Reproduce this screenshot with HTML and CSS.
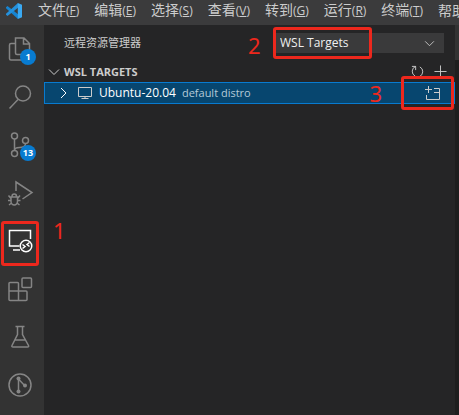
FILE: index.html
```html
<!DOCTYPE html>
<html lang="zh-CN">
<head>
<meta charset="utf-8">
<title>远程资源管理器</title>
<link rel="stylesheet" href="styles.css">
</head>
<body>
<div class="window">
  <header class="titlebar">
    <svg class="logo" viewBox="0 0 18 18" aria-hidden="true">
      <path fill="#1684d1" d="M1 5.2 2.5 4 13 12.3V17L1 6.2z"/>
      <path fill="#2491dd" d="M1 12.8 2.5 14 13 5.7V1L1 11.8z"/>
      <path fill="#3aa9f2" d="M12.8 1 17 2.8v12.4L12.8 17z"/>
    </svg>
    <nav class="menu">
      <button type="button">文件<span>(<u>F</u>)</span></button>
      <button type="button">编辑<span>(<u>E</u>)</span></button>
      <button type="button">选择<span>(<u>S</u>)</span></button>
      <button type="button">查看<span>(<u>V</u>)</span></button>
      <button type="button">转到<span>(<u>G</u>)</span></button>
      <button type="button">运行<span>(<u>R</u>)</span></button>
      <button type="button">终端<span>(<u>T</u>)</span></button>
      <button type="button">帮助</button>
    </nav>
  </header>
  <div class="workbench">
    <nav class="activity">
      <button type="button" aria-label="资源管理器">
        <svg viewBox="0 0 24 24"><path d="M7.5 1H16l5.5 5.5V16a1.5 1.5 0 0 1-1.5 1.500H9A1.500 1.500 0 0 1 7.500 16zM15.500 1v6h6M7.500 6.500H3A1.500 1.500 0 0 0 1.500 8v13.500A1.500 1.500 0 0 0 3 23h11.500a1.500 1.500 0 0 0 1.500-1.500v-4"/></svg>
        <span class="badge">1</span>
      </button>
      <button type="button" aria-label="搜索">
        <svg viewBox="0 0 24 24"><circle cx="15" cy="8.500" r="7.500"/><path d="M10 14.500 1.500 23.500"/></svg>
      </button>
      <button type="button" aria-label="源代码管理">
        <svg viewBox="0 0 24 24"><circle cx="6.500" cy="3" r="3"/><circle cx="17.500" cy="7.500" r="3"/><circle cx="6.500" cy="20.500" r="3"/><path d="M6.500 6v11.500M17.500 10.500c0 4-3.500 4-6 4-3 0-5 .5-5 3"/></svg>
        <span class="badge">13</span>
      </button>
      <button type="button" aria-label="运行和调试">
        <svg viewBox="0 0 24 24"><path d="M8 10V1l16 10.500-9.500 6.500"/><path d="M3 16h6.500v4.500a3.250 3.500 0 0 1-6.500 0zM4 16v-.5a2.250 2.500 0 0 1 4.500 0v.5M3 17.500.5 14.500M9.500 17.500l2.500-3M3 19.500H0M9.500 19.500h3M3.500 22l-2.500 2M9 22l2.500 2"/></svg>
      </button>
      <button type="button" class="active" aria-label="远程资源管理器">
        <svg viewBox="0 0 24 24"><path d="M11.500 17H1.500V1.500h21V10M5 21h7"/><circle cx="18" cy="17" r="5.750"/><path d="m14.500 15.500 2.500 2-2.500 2M21.500 13.500l-2.500 2 2.500 2"/></svg>
        <span class="mark mark-one"></span><span class="number number-one">1</span>
      </button>
      <button type="button" aria-label="扩展">
        <svg viewBox="0 0 24 24"><rect x="14" y="1" width="9.500" height="9.500" rx="1"/><path d="M1 6.500a1 1 0 0 1 1-1h7.500a1 1 0 0 1 1 1V14H18a1 1 0 0 1 1 1v7.500a1 1 0 0 1-1 1H2a1 1 0 0 1-1-1zM1 14h9.500v9.500"/></svg>
      </button>
      <button type="button" aria-label="测试">
        <svg viewBox="0 0 24 24"><path d="M7.500 1.500h9M9.500 1.500v8L4 20.500c-.5 1 0 1.500 1 1.500h14.500c1 0 1.500-.5 1-1.500L14.500 9.500v-8M7 15h10.500"/></svg>
      </button>
      <button type="button" aria-label="提交图">
        <svg viewBox="0 0 24 24"><circle cx="12" cy="12" r="11"/><path d="M10.500 6v12M10.500 6l6.500 7"/><g class="dots"><circle cx="10.500" cy="5.500" r="2"/><circle cx="10.500" cy="18.500" r="2"/><circle cx="17" cy="12.500" r="2"/></g></svg>
      </button>
    </nav>
    <main class="sidebar">
      <div class="heading">
        <label for="target">远程资源管理器</label>
        <div class="picker">
          <select id="target"><option>WSL Targets</option></select>
          <svg viewBox="0 0 12 8" aria-hidden="true"><path d="m1 1.500 5 5 5-5"/></svg>
          <span class="mark mark-two"></span><span class="number number-two">2</span>
        </div>
      </div>
      <div class="section">
        <svg class="chevron" viewBox="0 0 10 10" aria-hidden="true"><path d="m0 2.500 5 5 5-5"/></svg>
        <h2>WSL TARGETS</h2>
        <button type="button" aria-label="刷新"><svg viewBox="0 0 14 14"><path d="M5 1.500A5.750 5.750 0 0 0 4.500 12M1 1.500h4v4M9 12.500A5.750 5.750 0 0 0 9.500 2M8 12.500h2"/></svg></button>
        <button type="button" aria-label="添加"><svg viewBox="0 0 14 14"><path d="M7 .5v13M.5 7h13"/></svg></button>
      </div>
      <div class="target">
        <svg class="chevron" viewBox="0 0 10 10" aria-hidden="true"><path d="m3 0 5 5-5 5"/></svg>
        <svg class="screen" viewBox="0 0 14 14" aria-hidden="true"><path d="M.5 1.500h13v9H.5zM7 10.500v2M3.500 12.500h7"/></svg>
        <span class="name">Ubuntu-20.04</span>
        <span class="detail">default distro</span>
        <button type="button" aria-label="在新窗口中连接"><svg viewBox="0 0 16 14"><path d="M3.500 0v7M0 3.500h7M1.500 9v4.500h13v-11H9M9 6.500h5.500"/></svg></button>
        <span class="mark mark-three"></span><span class="number number-three">3</span>
      </div>
    </main>
    <aside class="editor"><div class="tabs"></div></aside>
  </div>
</div>
</body>
</html>
```

FILE: styles.css
```css
* { box-sizing: border-box; }

body {
  margin: 0;
  background: #252526;
  color: #ccc;
  font: 12px/20px "Open Sans", "Noto Sans CJK SC", sans-serif;
}

button {
  padding: 0;
  border: 0;
  background: none;
  color: inherit;
  font: inherit;
}

svg {
  display: block;
  flex: none;
  fill: none;
  stroke: currentColor;
  overflow: visible;
}

.window {
  display: flex;
  flex-direction: column;
  min-height: 100vh;
  overflow: hidden;
}

.titlebar {
  display: flex;
  align-items: center;
  gap: 15px;
  height: 25px;
  padding: 0 0 4px 5px;
  background: #3b3b3c;
  overflow: hidden;
}

.logo { width: 18px; height: 18px; stroke: none; }

.menu { display: flex; gap: 15px; }

.menu button {
  flex: none;
  font-size: 14px;
  white-space: nowrap;
}

.menu span { font-size: 12px; }

.workbench { display: flex; flex: 1; }

.activity {
  flex: none;
  width: 44px;
  background: #333;
  color: #858585;
}

.activity button {
  position: relative;
  display: flex;
  align-items: center;
  width: 100%;
  height: 48px;
  padding-left: 8px;
}

.activity svg { width: 24px; height: 24px; stroke-width: 1.5; }
.activity .active { color: #fff; }
.activity .dots { fill: currentColor; stroke: none; }

.badge {
  position: absolute;
  top: 24px;
  left: 20px;
  width: 16px;
  height: 16px;
  border-radius: 8px;
  background: #087bd0;
  color: #fff;
  font-size: 9px;
  font-weight: 700;
  line-height: 16px;
  text-align: center;
}

.sidebar { flex: 1; min-width: 0; }

.heading {
  display: flex;
  align-items: center;
  justify-content: space-between;
  height: 36px;
  padding: 0 11px 0 20px;
}

.heading label { font-size: 11px; }

.picker { position: relative; width: 171px; }

.picker select {
  display: block;
  width: 100%;
  height: 20px;
  padding: 0 24px 0 7px;
  border: 0;
  appearance: none;
  background: #3a3a3b;
  color: #f0f0f0;
  font: inherit;
}

.picker svg {
  position: absolute;
  top: 7px;
  right: 9px;
  width: 11px;
  height: 7px;
  pointer-events: none;
}

.section {
  display: flex;
  align-items: center;
  gap: 10px;
  height: 21px;
  padding: 0 8px 0 5px;
}

.section .chevron { margin-right: -5px; }

h2 {
  flex: 1;
  margin: 0;
  font-size: 11px;
  line-height: 20px;
}

.section button svg { width: 13px; height: 13px; }

.chevron { width: 10px; height: 10px; }

.target {
  position: relative;
  display: flex;
  align-items: center;
  height: 22px;
  padding: 0 13px;
  border: 1px solid #087bd0;
  background: #07466f;
  color: #fff;
}

.screen { width: 14px; height: 14px; margin: 0 7px 0 10px; color: #ccc; }

.detail {
  flex: 1;
  margin-left: 6px;
  color: #b5cad8;
  font-size: 11px;
}

.target button { color: #ccc; }

.target button svg { width: 16px; height: 14px; }

.editor { flex: none; width: 4px; background: #1e1e1e; }

.tabs { height: 35px; background: #333; }

.mark {
  position: absolute;
  border: 3px solid #ed281d;
  border-radius: 3px;
  pointer-events: none;
}

.mark-one { top: 4px; left: 1px; width: 38px; height: 45px; }
.mark-two { top: -6px; left: 0; width: 99px; height: 32px; }
.mark-three { top: -7px; right: 0; width: 53px; height: 34px; }

.number {
  position: absolute;
  color: #ed281d;
  font-family: "Noto Sans", sans-serif;
  font-size: 22px;
  line-height: 24px;
  pointer-events: none;
}

.number-one { top: 1px; left: 53px; }
.number-two { top: 0; left: -25px; }
.number-three { top: -2px; right: 72px; }
```
